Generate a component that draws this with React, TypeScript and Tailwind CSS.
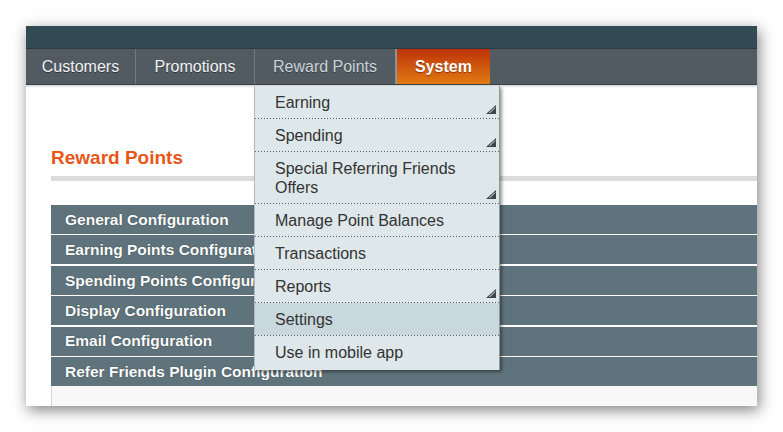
import React from "react";

const Grip = () => (
  <svg width="10" height="9" viewBox="0 0 10 9" className="absolute right-[3px] bottom-[4px]">
    <polygon points="0,9 10,9 10,0" fill="#3f4649" />
    <line x1="3.5" y1="8" x2="9" y2="2.5" stroke="#dfe6e8" strokeWidth="1" />
  </svg>
);

const menu: { label: string[]; grip?: boolean; active?: boolean; last?: boolean }[] = [
  { label: ["Earning"], grip: true },
  { label: ["Spending"], grip: true },
  { label: ["Special Referring Friends", "Offers"], grip: true },
  { label: ["Manage Point Balances"] },
  { label: ["Transactions"] },
  { label: ["Reports"], grip: true },
  { label: ["Settings"], active: true },
  { label: ["Use in mobile app"], last: true },
];

const rows = [
  "General Configuration",
  "Earning Points Configuration",
  "Spending Points Configuration",
  "Display Configuration",
  "Email Configuration",
  "Refer Friends Plugin Configuration",
];

export default function App() {
  return (
    <div className="w-[783px] h-[432px] bg-white overflow-hidden pl-[26px] pt-[26px] font-['Liberation_Sans',Arial,sans-serif]">
      <div className="relative w-[731px] h-[380px] flex flex-col bg-white shadow-[2px_4px_14px_rgba(0,0,0,0.5)] overflow-hidden">
        {/* header band */}
        <div className="h-[23px] bg-[#324b53] border-b border-[#2a3a40] shrink-0" />
        {/* nav */}
        <div className="h-[36px] shrink-0 flex bg-[#535b62] border-b border-[#3a4246]">
          <div className="w-[109px] flex items-center justify-center text-[16px] text-[#f1f3f4] [text-shadow:0_1px_0_rgba(0,0,0,0.45)]">
            Customers
          </div>
          <div className="w-px bg-[#727a80]" />
          <div className="w-[118px] flex items-center justify-center text-[16px] text-[#f1f3f4] [text-shadow:0_1px_0_rgba(0,0,0,0.45)]">
            Promotions
          </div>
          <div className="w-px bg-[#727a80]" />
          <div className="w-[140px] flex items-center justify-center text-[16px] text-[#c9d3d9] [text-shadow:0_1px_0_rgba(0,0,0,0.35)]">
            Reward Points
          </div>
          <div className="w-[2px] bg-[#8c9297]" />
          <div className="w-[93px] flex items-center justify-center text-[16px] font-bold text-white bg-[linear-gradient(to_bottom,#bd3309,#e27a12)] [text-shadow:0_1px_1px_rgba(90,20,0,0.6)]">
            System
          </div>
        </div>
        {/* content */}
        <div className="flex-1 flex flex-col bg-white">
          <div className="h-[3px] shrink-0 bg-[linear-gradient(to_bottom,#cfd3d5,#ffffff)]" />
          <div className="pl-[25px] pt-[59px] flex flex-col">
            <div className="text-[19px] leading-[22px] font-bold text-[#e8561a]">Reward Points</div>
            <div className="mt-[7px] h-[5px] bg-[#dcdcdc]" />
            <div className="mt-[24px] flex flex-col gap-[1.4px] bg-white">
              {rows.map((r) => (
                <div
                  key={r}
                  className="h-[29px] flex items-center pl-[14px] bg-[#5f737c] text-white font-bold text-[15.5px] [text-shadow:0_0_1px_rgba(30,40,45,0.9)] whitespace-nowrap"
                >
                  {r}
                </div>
              ))}
            </div>
            <div className="h-[30px] bg-[#f8f8f8] border-l border-[#d6d6d6]" />
          </div>
        </div>

        {/* dropdown menu */}
        <div className="absolute left-[228px] top-[60px] w-[246px] bg-[#dee7e9] border-l border-[#b3bbbe] border-r border-r-[#8f989b] shadow-[2px_2px_3px_rgba(0,0,0,0.4)] flex flex-col">
          {menu.map((m, i) => (
            <div key={i} className="relative flex flex-col">
              <div
                className={
                  "relative pl-[20px] text-[16px] leading-[19px] text-[#333333] pt-[6.5px] " +
                  (m.last ? "pb-[8.5px] " : "pb-[6.5px] ") +
                  (m.active ? "bg-[#c8d8dc]" : "")
                }
              >
                {m.label.map((l) => (
                  <div key={l}>{l}</div>
                ))}
                {m.grip && <Grip />}
              </div>
              {!m.last && (
                <div className="h-px bg-[linear-gradient(to_right,#5a5f62_1px,transparent_1px)] bg-[length:3px_1px]" />
              )}
            </div>
          ))}
        </div>
      </div>
    </div>
  );
}
